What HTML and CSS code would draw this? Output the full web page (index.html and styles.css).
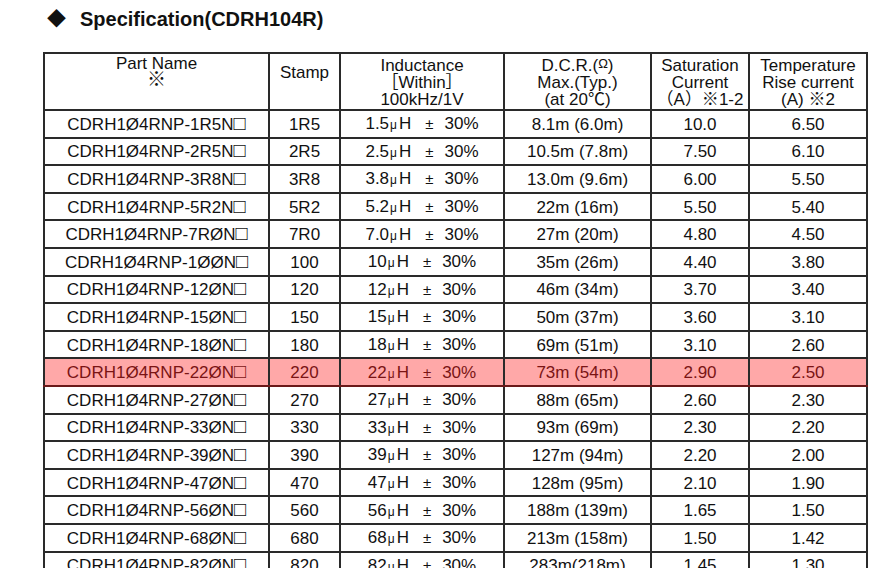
FILE: index.html
```html
<!DOCTYPE html>
<html lang="ja">

<head>
    <meta charset="UTF-8">
    <title>Specification(CDRH104R)</title>
    <link rel="stylesheet" href="styles.css">
</head>

<body>
    <h2 class="spec-title"><span class="diamond">◆</span>Specification(CDRH104R)</h2>

    <table class="spec-table">
        <colgroup>
            <col class="c-part">
            <col class="c-stamp">
            <col class="c-ind">
            <col class="c-dcr">
            <col class="c-sat">
            <col class="c-temp">
        </colgroup>
        <thead>
            <tr>
                <th class="top">Part Name<br><span class="cj kome">※</span></th>
                <th class="top stamp">Stamp</th>
                <th>Inductance<br><span class="cj">［</span>Within<span class="cj">］</span><br>100kHz/1V</th>
                <th>D.C.R.(<span class="cj ohm">Ω</span>)<br>Max.(Typ.)<br>(at 20<span class="cj">℃</span>)</th>
                <th>Saturation<br>Current<br><span class="cj">（</span>A<span class="cj">）※</span>1-2</th>
                <th>Temperature<br>Rise current<br>(A) <span class="cj">※</span>2</th>
            </tr>
        </thead>
        <tbody>
            <tr><td>CDRH1Ø4RNP-1R5N<span class="cj box">□</span></td><td>1R5</td><td>1.5<span class="mu">μ</span>H<span class="pm">±</span>30%</td><td>8.1m (6.0m)</td><td>10.0</td><td>6.50</td></tr>
            <tr><td>CDRH1Ø4RNP-2R5N<span class="cj box">□</span></td><td>2R5</td><td>2.5<span class="mu">μ</span>H<span class="pm">±</span>30%</td><td>10.5m (7.8m)</td><td>7.50</td><td>6.10</td></tr>
            <tr><td>CDRH1Ø4RNP-3R8N<span class="cj box">□</span></td><td>3R8</td><td>3.8<span class="mu">μ</span>H<span class="pm">±</span>30%</td><td>13.0m (9.6m)</td><td>6.00</td><td>5.50</td></tr>
            <tr><td>CDRH1Ø4RNP-5R2N<span class="cj box">□</span></td><td>5R2</td><td>5.2<span class="mu">μ</span>H<span class="pm">±</span>30%</td><td>22m (16m)</td><td>5.50</td><td>5.40</td></tr>
            <tr><td>CDRH1Ø4RNP-7RØN<span class="cj box">□</span></td><td>7R0</td><td>7.0<span class="mu">μ</span>H<span class="pm">±</span>30%</td><td>27m (20m)</td><td>4.80</td><td>4.50</td></tr>
            <tr><td>CDRH1Ø4RNP-1ØØN<span class="cj box">□</span></td><td>100</td><td>10<span class="mu">μ</span>H<span class="pm">±</span>30%</td><td>35m (26m)</td><td>4.40</td><td>3.80</td></tr>
            <tr><td>CDRH1Ø4RNP-12ØN<span class="cj box">□</span></td><td>120</td><td>12<span class="mu">μ</span>H<span class="pm">±</span>30%</td><td>46m (34m)</td><td>3.70</td><td>3.40</td></tr>
            <tr><td>CDRH1Ø4RNP-15ØN<span class="cj box">□</span></td><td>150</td><td>15<span class="mu">μ</span>H<span class="pm">±</span>30%</td><td>50m (37m)</td><td>3.60</td><td>3.10</td></tr>
            <tr><td>CDRH1Ø4RNP-18ØN<span class="cj box">□</span></td><td>180</td><td>18<span class="mu">μ</span>H<span class="pm">±</span>30%</td><td>69m (51m)</td><td>3.10</td><td>2.60</td></tr>
            <tr class="hilite"><td>CDRH1Ø4RNP-22ØN<span class="cj box">□</span></td><td>220</td><td>22<span class="mu">μ</span>H<span class="pm">±</span>30%</td><td>73m (54m)</td><td>2.90</td><td>2.50</td></tr>
            <tr><td>CDRH1Ø4RNP-27ØN<span class="cj box">□</span></td><td>270</td><td>27<span class="mu">μ</span>H<span class="pm">±</span>30%</td><td>88m (65m)</td><td>2.60</td><td>2.30</td></tr>
            <tr><td>CDRH1Ø4RNP-33ØN<span class="cj box">□</span></td><td>330</td><td>33<span class="mu">μ</span>H<span class="pm">±</span>30%</td><td>93m (69m)</td><td>2.30</td><td>2.20</td></tr>
            <tr><td>CDRH1Ø4RNP-39ØN<span class="cj box">□</span></td><td>390</td><td>39<span class="mu">μ</span>H<span class="pm">±</span>30%</td><td>127m (94m)</td><td>2.20</td><td>2.00</td></tr>
            <tr><td>CDRH1Ø4RNP-47ØN<span class="cj box">□</span></td><td>470</td><td>47<span class="mu">μ</span>H<span class="pm">±</span>30%</td><td>128m (95m)</td><td>2.10</td><td>1.90</td></tr>
            <tr><td>CDRH1Ø4RNP-56ØN<span class="cj box">□</span></td><td>560</td><td>56<span class="mu">μ</span>H<span class="pm">±</span>30%</td><td>188m (139m)</td><td>1.65</td><td>1.50</td></tr>
            <tr><td>CDRH1Ø4RNP-68ØN<span class="cj box">□</span></td><td>680</td><td>68<span class="mu">μ</span>H<span class="pm">±</span>30%</td><td>213m (158m)</td><td>1.50</td><td>1.42</td></tr>
            <tr><td>CDRH1Ø4RNP-82ØN<span class="cj box">□</span></td><td>820</td><td>82<span class="mu">μ</span>H<span class="pm">±</span>30%</td><td>283m(218m)</td><td>1.45</td><td>1.30</td></tr>
        </tbody>
    </table>
</body>

</html>
```

FILE: styles.css
```css
body {
    font-family: "Liberation Sans", "Noto Sans CJK JP", sans-serif;
    margin: 0;
    padding: 0;
    color: #111;
    background: white;
}

/* Titulo */
.spec-title {
    margin: 0;
    padding: 7px 0 0 47px;
    height: 52px;
    box-sizing: border-box;
    font-size: 20px;
    font-weight: bold;
    line-height: 24px;
}

.diamond {
    display: inline-block;
    width: 33px;
    font-size: 19px;
}

/* Tabla */
.spec-table {
    margin-left: 43px;
    border-collapse: collapse;
    table-layout: fixed;
    width: 825px;
    font-size: 17px;
    border: 2px solid #222;
}

.c-part { width: 225px; }
.c-stamp { width: 71px; }
.c-ind { width: 164px; }
.c-dcr { width: 147px; }
.c-sat { width: 98px; }
.c-temp { width: 118px; }

.spec-table th,
.spec-table td {
    border: 2px solid #2a2a2a;
    text-align: center;
    padding: 0;
}

.spec-table th {
    font-weight: normal;
    line-height: 17px;
    height: 54px;
    vertical-align: middle;
    padding-top: 1px;
}

.spec-table th.top {
    vertical-align: top;
}

.spec-table th.stamp {
    height: 45px;
    padding-top: 10px;
}

/* glifos CJK sin agrandar la linea */
.cj {
    line-height: 0;
}

.kome {
    font-size: 19px;
}

.box {
    font-size: 20px;
}

.spec-table td {
    height: 23.6px;
    line-height: 18px;
    padding-top: 2px;
    white-space: nowrap;
    vertical-align: middle;
}

.mu {
    font-size: 12px;
    margin: 0 2px 0 1px;
}

.pm {
    font-size: 15px;
    margin: 0 11px 0 14px;
}

.ohm {
    font-size: 13px;
    vertical-align: 3px;
}

.hilite td {
    background: #ffa8a8;
    color: #7a1414;
    border-top-color: #6b1a1a;
    border-bottom-color: #6b1a1a;
}
```
